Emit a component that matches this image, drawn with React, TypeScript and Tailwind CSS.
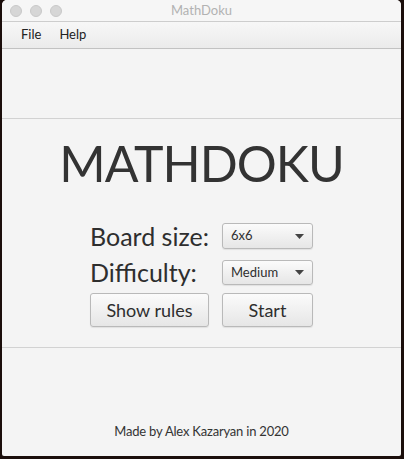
import { ReactNode } from 'react';

const font = { fontFamily: 'Lato, "Noto Sans", sans-serif' };

function Light() {
  return <div className="h-[12px] w-[12px] rounded-full border border-[#c8c8c8] bg-[#d6d6d6]" />;
}

function Combo({ label }: { label: string }) {
  return (
    <div className="flex h-full w-full items-center justify-between rounded-[3px] border border-[#b9b9b9] bg-gradient-to-b from-[#fbfbfb] to-[#e6e6e6] pl-[8px] pr-[8px] shadow-[0_1px_1px_rgba(0,0,0,0.08)]">
      <span className="text-[13px] text-[#2e2e2e]">{label}</span>
      <svg width="9" height="5" viewBox="0 0 9 5">
        <path d="M0 0 L9 0 L4.5 5 Z" fill="#444" />
      </svg>
    </div>
  );
}

function Btn({ children }: { children: ReactNode }) {
  return (
    <button className="flex h-full w-full items-center justify-center rounded-[3px] border border-[#b9b9b9] bg-gradient-to-b from-[#fbfbfb] to-[#e6e6e6] text-[18px] text-[#2e2e2e] shadow-[0_1px_1px_rgba(0,0,0,0.08)]">
      {children}
    </button>
  );
}

export default function App() {
  return (
    <div className="flex h-[459px] w-[404px] bg-[#1b0e0b] pl-[2px]" style={font}>
      <div className="flex h-[456px] w-[399px] flex-col overflow-hidden rounded-t-[5px] rounded-b-[2px] bg-[#f4f4f4]">
        {/* title bar */}
        <div className="relative flex h-[22px] items-center border-b border-[#cdcdcd] bg-[#f6f6f6] pl-[8px] pt-[1px]">
          <div className="flex gap-[8px]">
            <Light />
            <Light />
            <Light />
          </div>
          <div className="absolute inset-0 flex items-center justify-center text-[13px] text-[#b2b2b2]">MathDoku</div>
        </div>
        {/* menu */}
        <div className="flex h-[27px] items-center gap-[18px] border-b border-[#c2c2c2] bg-gradient-to-b from-[#f7f7f7] to-[#ebebeb] pl-[19px] text-[13px] text-[#222]">
          <span>File</span>
          <span>Help</span>
        </div>
        <div className="h-[70px] border-b border-[#d2d2d2]" />
        {/* main */}
        <div className="flex h-[229px] flex-col items-center border-b border-[#d2d2d2]">
          <div className="mt-[16px] h-[56px] whitespace-nowrap text-[50px] leading-[56px] tracking-[-1px] text-[#333]">MATHDOKU</div>
          <div className="mt-[32px] flex flex-col">
            <div className="flex h-[26px] gap-[13px]">
              <div className="flex w-[119px] items-center whitespace-nowrap text-[25px] leading-none text-[#2e2e2e]">Board size:</div>
              <div className="w-[91px]">
                <Combo label="6x6" />
              </div>
            </div>
            <div className="mt-[11px] flex h-[25px] gap-[13px]">
              <div className="flex w-[119px] items-center whitespace-nowrap text-[25px] leading-none text-[#2e2e2e]">Difficulty:</div>
              <div className="w-[91px]">
                <Combo label="Medium" />
              </div>
            </div>
            <div className="mt-[8px] flex h-[34px] gap-[13px]">
              <div className="w-[119px]">
                <Btn>Show rules</Btn>
              </div>
              <div className="w-[91px]">
                <Btn>Start</Btn>
              </div>
            </div>
          </div>
        </div>
        <div className="flex flex-1 items-end justify-center pb-[15px] text-[13px] tracking-[-0.2px] text-[#333]">Made by Alex Kazaryan in 2020</div>
      </div>
    </div>
  );
}
